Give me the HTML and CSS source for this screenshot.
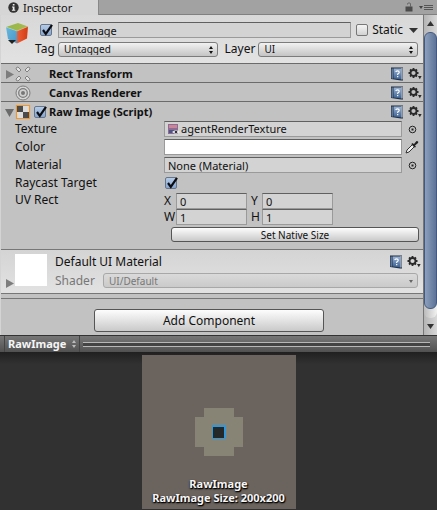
FILE: index.html
```html
<!DOCTYPE html>
<html lang="en">
<head>
<meta charset="utf-8">
<title>Inspector</title>
<link rel="stylesheet" href="styles.css">
</head>
<body>
<svg class="defs" aria-hidden="true">
  <defs>
    <linearGradient id="bookFill" x1="0" y1="0" x2="0" y2="1"><stop offset="0" stop-color="#9cb5d6"/><stop offset="1" stop-color="#3a5f90"/></linearGradient>
    <symbol id="check" viewBox="0 0 14 14"><path d="M3 7 L5.8 10.8 L12 1.8" fill="none" stroke="#0b0b12" stroke-width="2.2"/></symbol>
    <symbol id="book" viewBox="0 0 14 14">
      <path d="M1 .5 H13 V13.5 H11 L1 12 Z" fill="#1d2c42"/>
      <path d="M1.500 1.500 H3 V11.800 L1.500 11.500 Z" fill="#5d7899"/>
      <path d="M3.500 1.500 H11.500 V12.500 L3.500 11.500 Z" fill="url(#bookFill)"/>
      <path d="M11.500 1 H12.500 V12.500 H11.500 Z" fill="#dfe5ee"/>
      <path d="M5.800 5 Q6 3.800 7.500 3.800 Q9.200 3.800 9.200 5.200 Q9.200 6.200 7.700 7 V8 M7.700 9 V10.200" fill="none" stroke="#fff" stroke-width="1.200"/>
    </symbol>
    <symbol id="gear" viewBox="0 0 14 14">
      <circle cx="5.5" cy="6" r="3" fill="none" stroke="#2a2a2a" stroke-width="1.8"/>
      <path d="M5.5 1V3M5.5 9V11M.5 6H2.5M8.5 6H10.5M2 2.5L3.4 3.9M7.6 8.1L9 9.5M9 2.5L7.6 3.9M3.4 8.1L2 9.5" stroke="#2a2a2a" stroke-width="1.8"/>
      <path d="M10 9H13.6L11.8 12.2Z" fill="#2a2a2a"/>
    </symbol>
    <symbol id="updown" viewBox="0 0 6 8"><path d="M3 0L5 3H1ZM1 5H5L3 8Z" fill="currentColor"/></symbol>
    <symbol id="picker" viewBox="0 0 9 9"><circle cx="4.5" cy="4.5" r="3.3" fill="none" stroke="#222"/><rect x="3.5" y="3.5" width="2" height="2" fill="#222"/></symbol>
    <symbol id="right" viewBox="0 0 9 9"><path d="M1 0L9 4.5L1 9Z" fill="#7d7d7d"/></symbol>
    <symbol id="down" viewBox="0 0 9 9"><path d="M0 1H9L4.5 9Z" fill="#6b6b6b"/></symbol>
  </defs>
</svg>

<nav class="tabs">
  <a class="tab" href="#inspector">
    <svg class="i11" viewBox="0 0 11 11"><circle cx="5.5" cy="5.5" r="5.2" fill="#333"/><path d="M4.8 2H6.5V3.5H4.8ZM4 4.5H6.5V7.8H7.3V8.8H3.9V7.8H4.8V5.4H4Z" fill="#eee"/></svg>
    Inspector
  </a>
  <button class="icon lock" aria-label="Lock"><svg width="8" height="10" viewBox="0 0 8 10"><path d="M.5 4.5H7.5V9.5H.5Z" fill="#4b4b4b"/><path d="M2.5 2.5V1.5Q4 .2 5.5 1.5V5" fill="none" stroke="#666"/></svg></button>
  <button class="icon" aria-label="Menu"><svg width="14" height="7" viewBox="0 0 14 7"><path d="M0 2H4L2 5Z" fill="#444"/><path d="M5 1.5H14M5 3.5H14M5 5.5H14" stroke="#555"/></svg></button>
</nav>

<div class="body">
  <main class="inspector" id="inspector">
    <header class="object">
      <div class="cube">
        <svg width="24" height="24" viewBox="0 0 24 24">
          <defs>
            <linearGradient id="red" x1="0" x2="1"><stop offset="0" stop-color="#e8603a"/><stop offset="1" stop-color="#d63a12"/></linearGradient>
            <linearGradient id="blue" x1="0" y1="0" x2="1" y2="1"><stop offset="0" stop-color="#65b9df"/><stop offset="1" stop-color="#4c94c6"/></linearGradient>
            <linearGradient id="green" x1="0" x2="1"><stop offset="0" stop-color="#93b846"/><stop offset="1" stop-color="#a9b951"/></linearGradient>
          </defs>
          <path d="M0 5L12 1L22 4.500L11 9Z" fill="url(#green)"/>
          <path d="M0 5L11 9V21.500L2 17Z" fill="url(#blue)"/>
          <path d="M11 9L22 4.500L21 16.500L11 21.500Z" fill="url(#red)"/>
          <path d="M0 5L11 9L22 4.500" fill="none" stroke="#e9e5c0" stroke-width=".6" opacity=".6"/>
          <path d="M2 18H10L6 22Z" fill="#222"/>
        </svg>
      </div>
      <div class="object-rows">
        <div class="line">
          <span class="lead"><span class="tick"><input type="checkbox" checked aria-label="Active"><svg><use href="#check"/></svg></span></span>
          <input class="field grow" type="text" value="RawImage" aria-label="Name">
          <label class="static"><span class="tick"><input type="checkbox"></span>Static</label>
          <svg class="i9" viewBox="0 0 9 9"><path d="M0 2H9L4.500 7Z" fill="#333"/></svg>
        </div>
        <div class="line">
          <label class="lead" for="tag">Tag</label>
          <span class="select grow"><select id="tag"><option>Untagged</option></select><svg><use href="#updown"/></svg></span>
          <label class="layer" for="layer">Layer</label>
          <span class="select grow"><select id="layer"><option>UI</option></select><svg><use href="#updown"/></svg></span>
        </div>
      </div>
    </header>

    <section class="component">
      <h2 class="bar">
        <svg class="i9"><use href="#right"/></svg>
        <svg class="i16" viewBox="0 0 16 16"><path d="M1 3Q1 1 3 1L6 4L4 6ZM15 3Q15 1 13 1L10 4L12 6ZM1 13Q1 15 3 15L6 12L4 10ZM15 13Q15 15 13 15L10 12L12 10Z" fill="#e2e2e2" stroke="#777" stroke-width=".9"/></svg>
        <span class="title">Rect Transform</span>
        <button class="icon" aria-label="Help"><svg class="i14"><use href="#book"/></svg></button>
        <button class="icon" aria-label="Settings"><svg class="i14"><use href="#gear"/></svg></button>
      </h2>
    </section>
    <section class="component">
      <h2 class="bar">
        <span class="i9"></span>
        <svg class="i16" viewBox="0 0 16 16"><g fill="none" stroke="#7d7d7d"><circle cx="8" cy="8" r="7" fill="#d6d6d6"/><circle cx="8" cy="8" r="4.300" fill="#d0d0d0" stroke-width="1.300"/></g><circle cx="8" cy="8" r="2" fill="#777"/></svg>
        <span class="title">Canvas Renderer</span>
        <button class="icon" aria-label="Help"><svg class="i14"><use href="#book"/></svg></button>
        <button class="icon" aria-label="Settings"><svg class="i14"><use href="#gear"/></svg></button>
      </h2>
    </section>
    <section class="component">
      <h2 class="bar script">
        <svg class="i9"><use href="#down"/></svg>
        <svg class="i16" viewBox="0 0 16 16"><path d="M1.500 1.500H14.500V14.500H1.500Z" fill="#dcdcdc" stroke="#f0982d" stroke-width="1.200"/><path d="M6 2H10V6H6ZM2 6H6V10H2ZM10 6H14V10H10ZM6 10H10V14H6Z" fill="#dcdcdc"/><path d="M2 2H8V8H2ZM8 8H14V14H8Z" fill="#4b4b4b"/></svg>
        <span class="tick"><input type="checkbox" checked aria-label="Enabled"><svg><use href="#check"/></svg></span>
        <span class="title">Raw Image (Script)</span>
        <button class="icon" aria-label="Help"><svg class="i14"><use href="#book"/></svg></button>
        <button class="icon" aria-label="Settings"><svg class="i14"><use href="#gear"/></svg></button>
      </h2>
      <div class="props">
        <div class="prop">
          <label for="texture">Texture</label>
          <span class="field object-field">
            <svg width="12" height="11" viewBox="0 0 12 11"><path d="M0 0H10V10H0Z" fill="#8d6b94"/><path d="M1 1H9V4H1Z" fill="#ca8597"/><path d="M1 6H9V9H1Z" fill="#4c5480"/><path d="M4 8Q8 4.500 12 8Q8 11.500 4 8" fill="#eee"/><circle cx="8" cy="8" r="1.300" fill="#333"/></svg>
            <input id="texture" type="text" value="agentRenderTexture">
          </span>
          <button class="icon end" aria-label="Select texture"><svg class="i9"><use href="#picker"/></svg></button>
        </div>
        <div class="prop">
          <span>Color</span>
          <button class="field swatch" aria-label="Color"></button>
          <button class="icon end" aria-label="Pick color"><svg class="i14" viewBox="0 0 14 14"><path d="M1 13L2 10L8 4L10 6L4 12Z" fill="#f2f2f2" stroke="#333"/><path d="M7 3L9 4L11.500 1Q14 1 13 3L10 5.500L11 7L9.500 7.500L6.500 4.500Z" fill="#222"/></svg></button>
        </div>
        <div class="prop">
          <label for="material">Material</label>
          <input class="field" id="material" type="text" value="None (Material)">
          <button class="icon end" aria-label="Select material"><svg class="i9"><use href="#picker"/></svg></button>
        </div>
        <div class="prop">
          <label for="raycast">Raycast Target</label>
          <span class="tick inset"><input id="raycast" type="checkbox" checked><svg><use href="#check"/></svg></span>
        </div>
        <div class="prop uv">
          <span>UV Rect</span>
          <div class="quad">
            <label for="x">X</label><input class="field" id="x" type="text" value="0">
            <label for="y">Y</label><input class="field" id="y" type="text" value="0">
            <label for="w">W</label><input class="field" id="w" type="text" value="1">
            <label for="h">H</label><input class="field" id="h" type="text" value="1">
          </div>
        </div>
        <button class="button native">Set Native Size</button>
      </div>
    </section>

    <section class="material">
      <svg class="i9"><use href="#right"/></svg>
      <div class="thumb"></div>
      <div class="material-rows">
        <div class="material-head">
          <span class="title">Default UI Material</span>
          <button class="icon" aria-label="Help"><svg class="i14"><use href="#book"/></svg></button>
          <button class="icon" aria-label="Settings"><svg class="i14"><use href="#gear"/></svg></button>
        </div>
        <div class="shader">
          <label for="shader">Shader</label>
          <span class="select grow"><select id="shader" disabled><option>UI/Default</option></select><svg viewBox="0 0 6 8"><path d="M1 3H5L3 6Z" fill="#666"/></svg></span>
        </div>
      </div>
    </section>
    <footer class="add"><button class="button">Add Component</button></footer>
  </main>
  <div class="scroll">
    <svg class="i9" viewBox="0 0 9 9"><path d="M1 7H8L4.500 2Z" fill="#333"/></svg>
    <div class="track"><div class="handle"></div></div>
    <svg class="i9" viewBox="0 0 9 9"><path d="M1 2H8L4.500 7Z" fill="#333"/></svg>
  </div>
</div>

<div class="preview-bar">
  <button class="preview-name">RawImage <svg><use href="#updown"/></svg></button>
  <div class="grip"></div>
</div>
<section class="preview">
  <figure>
    <svg viewBox="0 0 154 154" shape-rendering="crispEdges">
      <path d="M0 0H154V154H0Z" fill="#6b635d"/>
      <path d="M62 53H92V62H101V92H92V101H62V92H53V62H62Z" fill="#878375"/>
      <path d="M70 70H84V84H70Z" fill="#3498d8"/>
      <path d="M71 72H82V83H71Z" fill="#252828"/>
    </svg>
    <figcaption>RawImage<br>RawImage Size: 200x200</figcaption>
  </figure>
</section>
</body>
</html>
```
FILE: styles.css
```css
* { box-sizing: border-box; }

body {
  margin: 0;
  min-height: 100vh;
  display: flex;
  flex-direction: column;
  background: #c2c2c2;
  color: #111;
  font: 12px/14px "Noto Sans", "Liberation Sans", sans-serif;
}

input, select, button { font: inherit; color: inherit; margin: 0; }
svg { display: block; flex: none; }
.defs { position: absolute; width: 0; height: 0; }
.i9 { width: 9px; height: 9px; flex: none; }
.i11 { width: 11px; height: 11px; }
.i14 { width: 14px; height: 14px; }
.i16 { width: 16px; height: 16px; }
.grow { flex: 1; min-width: 0; }
.icon { display: flex; padding: 0; border: 0; background: none; }

/* Tabs */
.tabs {
  display: flex;
  align-items: center;
  height: 15px;
  padding-right: 4px;
  gap: 6px;
  background: #a2a2a2;
  border-bottom: 1px solid #808080;
}
.tab {
  display: flex;
  align-items: center;
  gap: 4px;
  width: 99px;
  height: 15px;
  margin-right: auto;
  padding-left: 8px;
  background: #d6d6d6;
  border-right: 1px solid #888;
  color: inherit;
  font-size: 11px;
  line-height: 15px;
  text-decoration: none;
}

/* Controls */
.field {
  height: 16px;
  padding: 0 3px;
  border: 1px solid #9a9a9a;
  border-top-color: #606060;
  border-radius: 0;
  background: #d3d3d3;
  font-size: 11px;
  outline: 0;
}
.tick { position: relative; display: flex; flex: none; }
.tick input {
  appearance: none;
  width: 12px;
  height: 12px;
  border: 1px solid #777;
  border-radius: 2px;
  background: linear-gradient(#f4f4f4, #d2d2d2);
}
.tick input:checked { background: linear-gradient(#b5cbe6, #86a6d0); border-color: #66758a; }
.tick svg { position: absolute; left: 0; top: -1px; width: 14px; height: 14px; pointer-events: none; }
.select { position: relative; display: flex; }
.select select {
  appearance: none;
  width: 100%;
  height: 15px;
  padding: 0 16px 0 5px;
  border: 1px solid #7c7c7c;
  border-radius: 3px;
  background: linear-gradient(#f2f2f2, #c4c4c4);
  font-size: 10px;
  line-height: 12px;
}
.select select:disabled { color: #777; border-color: #a8a8a8; background: linear-gradient(#dadada, #cacaca); opacity: 1; }
.select svg { position: absolute; right: 4px; top: 4px; width: 6px; height: 8px; pointer-events: none; }
.button {
  border: 1px solid #555;
  border-radius: 3px;
  background: linear-gradient(#fdfdfd, #c9c9c9);
  padding: 0;
}

/* Panel */
.body { display: flex; }
.inspector { flex: 1; min-width: 0; border-left: 1px solid #d4d4d4; }
.object { display: flex; height: 48px; padding: 7px 5px 0; background: linear-gradient(#d8d8d8, #e2e2e2); }
.cube { width: 29px; flex: none; }
.object-rows { flex: 1; display: grid; gap: 3px; align-content: start; }
.line { display: flex; align-items: center; height: 16px; }
.lead { width: 23px; flex: none; display: flex; }
.lead .tick { margin-left: 5px; }
.static { display: flex; align-items: center; gap: 4px; margin: 0 6px 0 5px; }
.layer { margin: 0 3px 0 7px; }

.component { border-top: 1px solid #6b6b6b; }
.bar { display: flex; align-items: center; height: 18px; margin: 0; padding: 2px 1px 0 4px; font-size: 11px; }
.bar .i16 { margin: 0 18px 0 1px; }
.bar.script .i16 { margin-right: 3px; }
.bar .tick { margin-right: 3px; }
.title { flex: 1; }
.title + .icon { margin-right: 4px; }

.props { display: grid; gap: 2px; padding: 1px 4px 7px 14px; }
.prop { display: grid; grid-template-columns: 149px 1fr 17px; align-items: center; min-height: 16px; }
.prop .field { width: 100%; min-width: 0; }
.end { justify-self: end; width: 14px; justify-content: center; }
.object-field { display: flex; align-items: center; gap: 1px; }
.object-field input { flex: 1; min-width: 0; padding: 0; border: 0; background: none; outline: 0; }
.prop .swatch { background: #fff; }
.inset { margin-left: 1px; }
.uv { align-items: start; }
.quad { display: grid; grid-template-columns: 12px 71px 15px 71px; align-items: center; }
.quad label:nth-of-type(even) { padding-left: 4px; }
.native { height: 15px; margin-left: 156px; font-size: 10px; line-height: 12px; }

.material { display: flex; align-items: flex-end; height: 45px; padding: 5px 5px 5px 4px; border: solid #777; border-width: 1px 0; background: linear-gradient(#d4d4d4, #e2e2e2); }
.thumb { width: 32px; height: 32px; margin: 0 8px 2px 1px; background: #fff; }
.material-rows { flex: 1; height: 34px; }
.material-head { display: flex; align-items: center; height: 15px; margin-right: -3px; }
.shader { display: flex; align-items: center; height: 15px; margin-top: 4px; color: #777; }
.shader label { width: 48px; }
.add { display: flex; justify-content: center; margin-top: 4px; padding: 10px 6px 3px 0; border-top: 1px solid #777; }
.add .button { width: 230px; height: 23px; }

.scroll { width: 14px; flex: none; display: flex; flex-direction: column; align-items: center; gap: 4px; padding: 4px 0; border-left: 1px solid #777; background: linear-gradient(90deg, #b5b5b5, #d8d8d8); }
.track { flex: 1; width: 100%; padding-bottom: 9px; border-radius: 6px; background: linear-gradient(90deg, #bbb, #f2f2f2); }
.handle { height: 100%; border: 1px solid #44597d; border-radius: 6px; background: linear-gradient(90deg, #8c9fbd, #5d7397); }

/* Preview */
.preview-bar { display: flex; align-items: center; height: 17px; padding: 0 7px 0 4px; border-top: 1px solid #333; background: linear-gradient(#777, #515151); }
.preview-name { display: flex; align-items: center; gap: 5px; height: 16px; padding: 0 2px 0 3px; border: solid #444; border-width: 0 1px; background: none; color: #f5f5f5; font-size: 11px; font-weight: bold; }
.preview-name svg { width: 6px; height: 8px; color: #bbb; }
.grip { flex: 1; height: 5px; margin-left: 3px; border: solid #b8b8b8; border-width: 1px 0; background: #444; }
.preview { flex: 1; padding-top: 3px; background: linear-gradient(#202020, #313131 12px); }
figure { position: relative; width: 154px; margin: 0 auto; }
figcaption { position: absolute; left: 0; right: 0; bottom: 4px; text-align: center; white-space: nowrap; color: #f5f5f5; font-size: 11px; font-weight: bold; line-height: 14px; text-shadow: 1px 1px 1px #000, 0 1px 2px #000; }
```
